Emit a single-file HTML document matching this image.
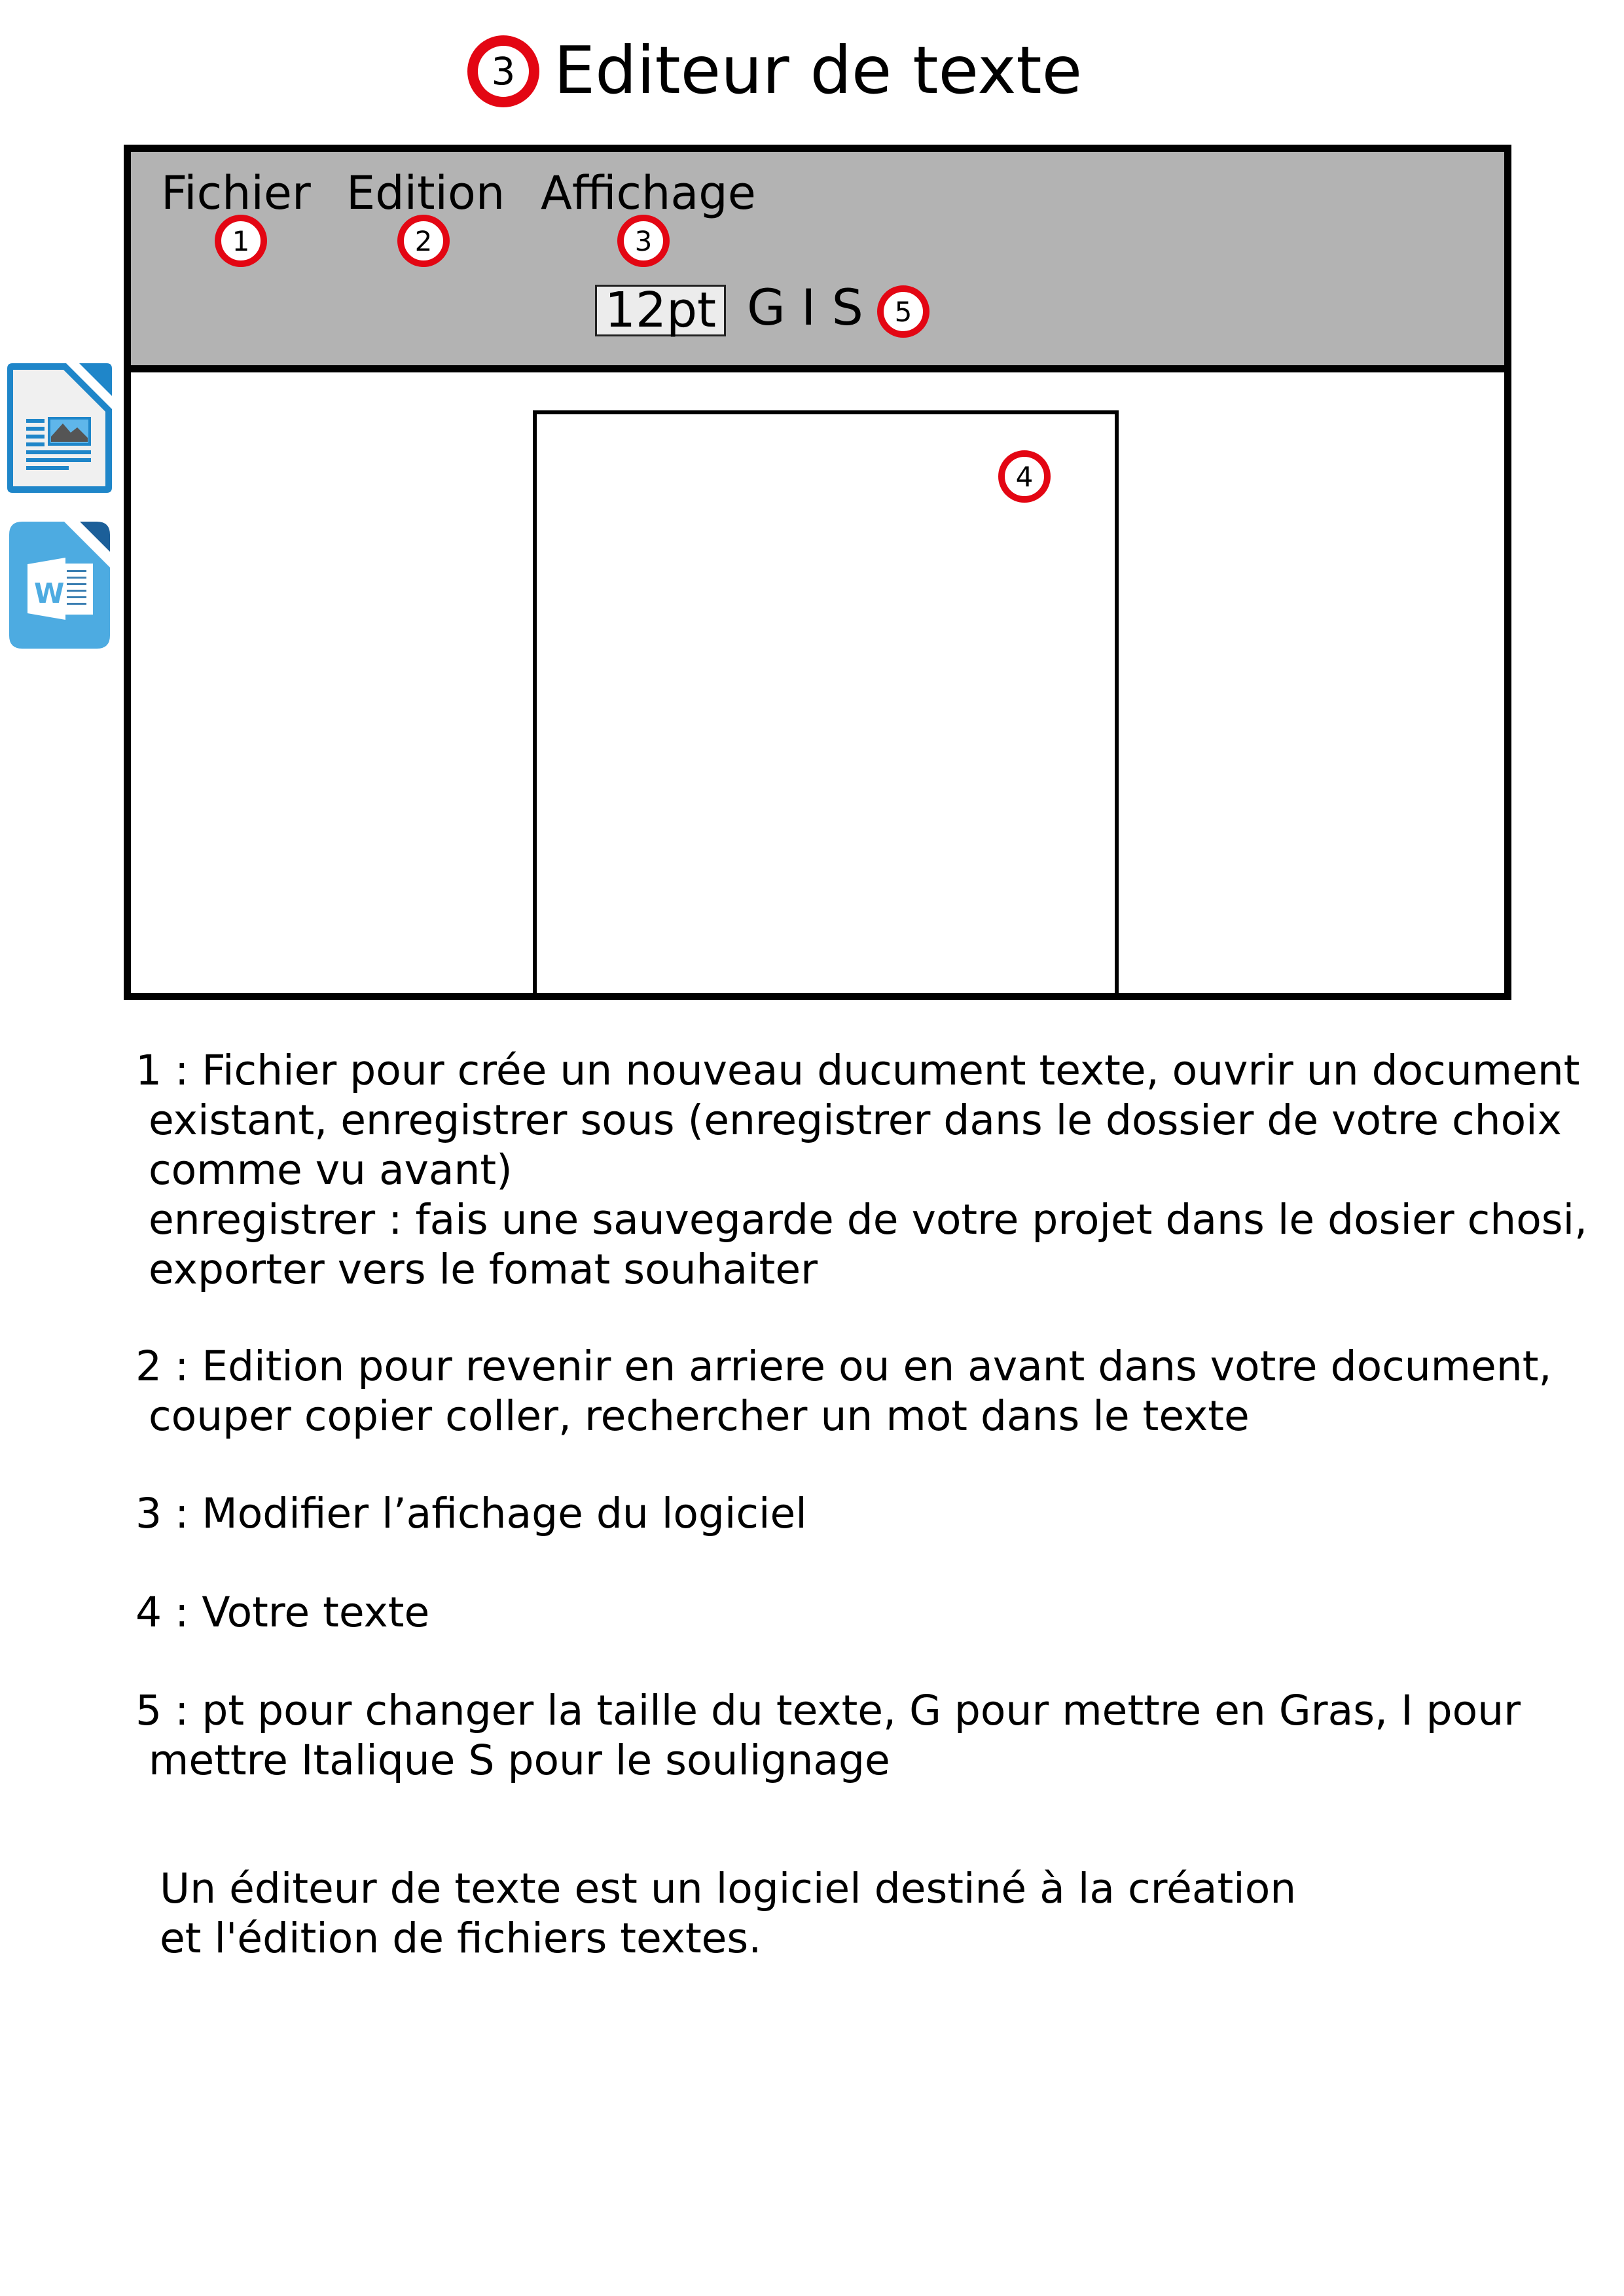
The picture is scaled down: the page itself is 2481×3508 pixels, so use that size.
<!DOCTYPE html>
<html><head><meta charset="utf-8"><style>
html,body{margin:0;padding:0;background:#fff}
body{width:2481px;height:3508px;position:relative;overflow:hidden;font-family:"DejaVu Sans","Liberation Sans",sans-serif;color:#000}
.a{position:absolute;white-space:pre}
.c{position:absolute;box-sizing:border-box;border-radius:50%;background:#fff;border:solid #e30613;display:flex;align-items:center;justify-content:center;font-family:"DejaVu Sans",sans-serif;color:#000}
.s{width:80px;height:80px;border-width:10px;font-size:42px}
.t{font-size:63px;line-height:76px}
</style></head><body>

<div class="c" style="left:714px;top:54px;width:110px;height:110px;border-width:16px;font-size:58px">3</div>
<div class="a" style="left:846px;top:48px;font-size:100px;line-height:120px">Editeur de texte</div>

<div class="a" style="left:189px;top:221px;width:2120px;height:1307px;box-sizing:border-box;border:11px solid #000;background:#fff"></div>
<div class="a" style="left:200px;top:232px;width:2098px;height:326px;background:#b3b3b3;border-bottom:11px solid #000"></div>
<div class="a" style="left:814px;top:627px;width:895px;height:895px;box-sizing:border-box;border:6px solid #000;border-bottom:none"></div>

<div class="a" style="left:246px;top:245px;font-size:70px;line-height:100px">Fichier</div>
<div class="a" style="left:529px;top:245px;font-size:70px;line-height:100px">Edition</div>
<div class="a" style="left:826px;top:245px;font-size:70px;line-height:100px">Affichage</div>

<div class="c s" style="left:328px;top:328px">1</div>
<div class="c s" style="left:607px;top:328px">2</div>
<div class="c s" style="left:943px;top:328px">3</div>
<div class="c s" style="left:1340px;top:436px">5</div>
<div class="c s" style="left:1525px;top:688px">4</div>

<div class="a" style="left:909px;top:435px;width:200px;height:79px;box-sizing:border-box;border:3px solid #222;background:#ececec;font-size:74px;line-height:73px;text-align:center">12pt</div>
<div class="a" style="left:1141px;top:420px;font-size:76px;line-height:100px">G I S</div>

<svg class="a" style="left:11px;top:555px" width="160" height="198" viewBox="0 0 160 198">
<path d="M8 0 H90 L160 70 V190 Q160 198 152 198 H8 Q0 198 0 190 V8 Q0 0 8 0Z" fill="#1f86c9"/>
<path d="M9 10 H86 L150 74 V188 H9Z" fill="#f0f0f0"/>
<path d="M110 0 H152 Q160 0 160 8 V50Z" fill="#1f86c9"/>
<rect x="29" y="85" width="28" height="6" fill="#1f86c9"/><rect x="29" y="97" width="28" height="6" fill="#1f86c9"/><rect x="29" y="109" width="28" height="6" fill="#1f86c9"/><rect x="29" y="121" width="28" height="6" fill="#1f86c9"/>
<rect x="62" y="82" width="66" height="44" fill="#1f86c9"/><rect x="66" y="86" width="58" height="36" fill="#5fb6ea"/>
<path d="M67 112 L85 92 L97 106 L107 98 L123 114 V120 H67Z" fill="#555"/>
<rect x="29" y="133" width="99" height="6" fill="#1f86c9"/><rect x="29" y="145" width="99" height="6" fill="#1f86c9"/><rect x="29" y="157" width="65" height="6" fill="#1f86c9"/>
</svg>

<svg class="a" style="left:14px;top:797px" width="154" height="194" viewBox="0 0 154 194">
<path d="M20 0 H84 L154 70 V174 Q154 194 134 194 H20 Q0 194 0 174 V20 Q0 0 20 0Z" fill="#4dabe1"/>
<path d="M108 0 H134 Q154 0 154 20 V46Z" fill="#1c5f99"/>
<path d="M28 65 L86 55 V150 L28 140Z" fill="#fff"/>
<rect x="86" y="64" width="42" height="78" fill="#fff"/>
<g fill="#3b7fb2"><rect x="88" y="74" width="30" height="3"/><rect x="88" y="84" width="30" height="3"/><rect x="88" y="94" width="30" height="3"/><rect x="88" y="104" width="30" height="3"/><rect x="88" y="114" width="30" height="3"/><rect x="88" y="124" width="30" height="3"/></g>
<text x="38" y="124" font-family="DejaVu Sans,sans-serif" font-size="42" fill="#4dabe1" font-weight="bold">W</text>
</svg>

<div class="a t" style="left:207px;top:1598px">1 : Fichier pour crée un nouveau ducument texte, ouvrir un document
 existant, enregistrer sous (enregistrer dans le dossier de votre choix
 comme vu avant)
 enregistrer : fais une sauvegarde de votre projet dans le dosier chosi,
 exporter vers le fomat souhaiter</div>
<div class="a t" style="left:207px;top:2050px">2 : Edition pour revenir en arriere ou en avant dans votre document,
 couper copier coller, rechercher un mot dans le texte</div>
<div class="a t" style="left:207px;top:2275px">3 : Modifier l’afichage du logiciel</div>
<div class="a t" style="left:207px;top:2426px">4 : Votre texte</div>
<div class="a t" style="left:207px;top:2576px">5 : pt pour changer la taille du texte, G pour mettre en Gras, I pour
 mettre Italique S pour le soulignage</div>
<div class="a t" style="left:244px;top:2848px">Un éditeur de texte est un logiciel destiné à la création
et l'édition de fichiers textes.</div>
</body></html>
